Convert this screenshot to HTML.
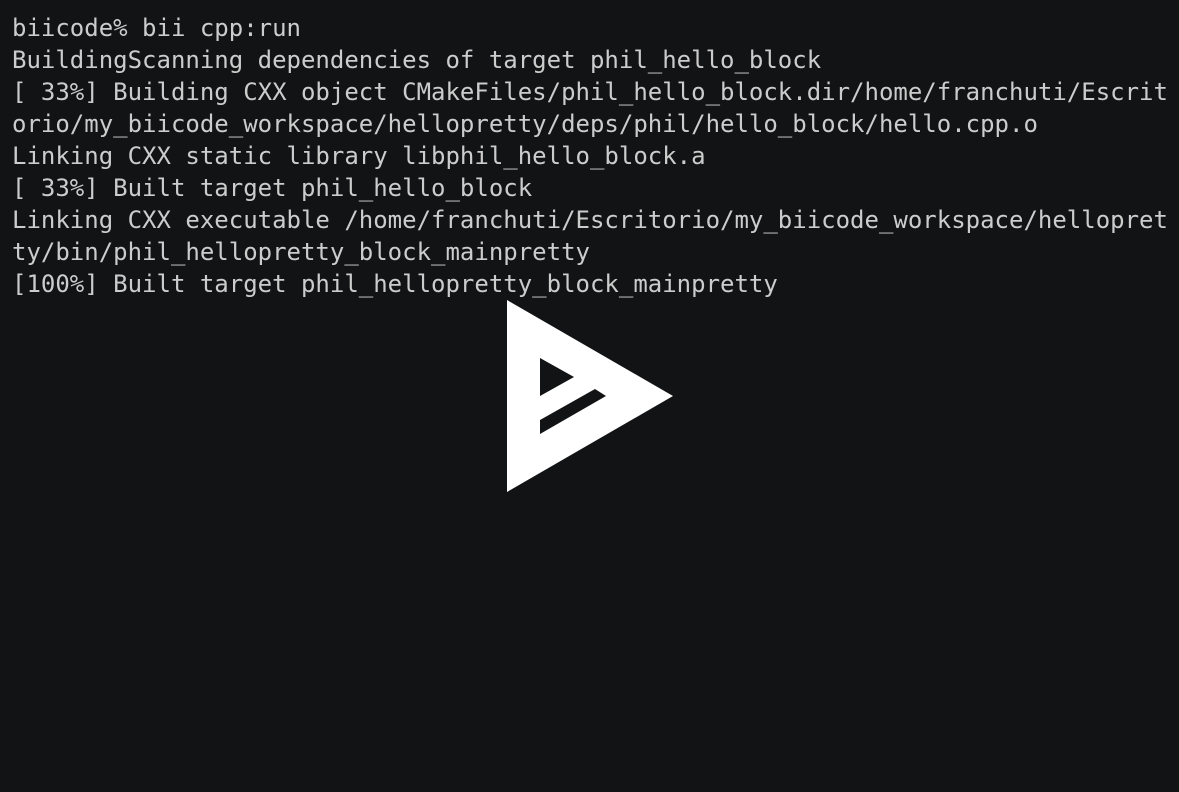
<!DOCTYPE html>
<html><head><style>
html,body{margin:0;padding:0;background:#121314;width:1179px;height:792px;overflow:hidden}
pre{margin:0;padding:12px 0 0 12px;font-family:"DejaVu Sans Mono","Liberation Mono",monospace;font-size:24px;line-height:32px;color:#cccccc;white-space:pre}
svg{position:absolute;left:0;top:0}
</style></head><body>
<pre>biicode% bii cpp:run
BuildingScanning dependencies of target phil_hello_block
[ 33%] Building CXX object CMakeFiles/phil_hello_block.dir/home/franchuti/Escrit
orio/my_biicode_workspace/hellopretty/deps/phil/hello_block/hello.cpp.o
Linking CXX static library libphil_hello_block.a
[ 33%] Built target phil_hello_block
Linking CXX executable /home/franchuti/Escritorio/my_biicode_workspace/hellopret
ty/bin/phil_hellopretty_block_mainpretty
[100%] Built target phil_hellopretty_block_mainpretty</pre>
<svg width="1179" height="792">
<polygon points="507,300 673,396 507,492" fill="#fff"/>
<polygon points="540,358 574,377 540,396" fill="#121314"/>
<polygon points="540,420 595,389 606,396 540,434" fill="#121314"/>
</svg>
</body></html>
